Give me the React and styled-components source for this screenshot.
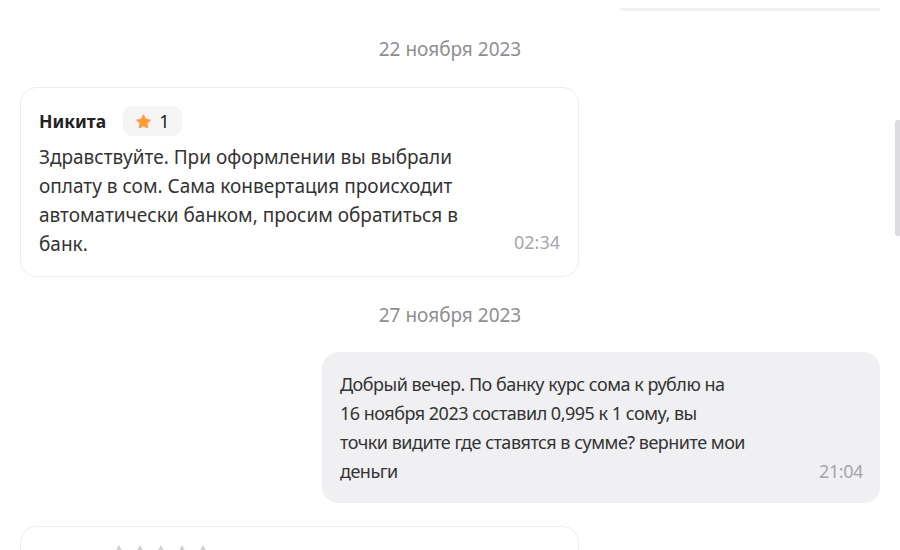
import React from "react";
import styled, { createGlobalStyle } from "styled-components";

const Global = createGlobalStyle`
  html, body { margin: 0; padding: 0; background: #fff; }
  body { font-family: "Noto Sans", "Open Sans", sans-serif; color: #333; }
`;

const Page = styled.div`
  position: relative;
  width: 900px;
  height: 550px;
  overflow: hidden;
  background: #fff;
`;

const Feed = styled.div`
  display: flex;
  flex-direction: column;
  padding: 0 20px;
`;

const PrevEdge = styled.div`
  align-self: flex-end;
  width: 260px;
  height: 3px;
  margin-top: 8px;
  background: #f0f0f1;
  border-radius: 0 0 2px 6px;
`;

const DateLabel = styled.div`
  align-self: center;
  font-size: 19px;
  line-height: 24px;
  color: #8e8e93;
  margin: ${(p) => p.$m};
`;

const Bubble = styled.div`
  box-sizing: border-box;
  width: ${(p) => p.$w}px;
  align-self: ${(p) => (p.$out ? "flex-end" : "flex-start")};
  background: ${(p) => (p.$out ? "#f0f0f2" : "#fff")};
  border: 1px solid ${(p) => (p.$out ? "#f0f0f2" : "#ededee")};
  border-radius: 16px;
  padding: ${(p) => p.$pad};
  margin-top: ${(p) => p.$mt || 0}px;
  height: ${(p) => (p.$h ? `${p.$h}px` : "auto")};
`;

const Header = styled.div`
  display: flex;
  align-items: center;
  gap: 17px;
  margin-bottom: 7px;
`;

const Name = styled.span`
  font-weight: 700;
  font-size: 17.5px;
  color: #222;
`;

const Badge = styled.span`
  display: inline-flex;
  align-items: center;
  gap: 7px;
  height: 30px;
  padding: 0 13px 0 12px;
  background: #f5f5f6;
  border-radius: 9px;
  font-size: 18px;
  color: #222;
`;

const Text = styled.div`
  font-size: ${(p) => p.$fs}px;
  line-height: 29px;
  color: #333;
  letter-spacing: ${(p) => p.$ls || "0"};
`;

const Time = styled.span`
  float: right;
  font-size: 18px;
  line-height: 29px;
  color: #a6a6aa;
  margin-left: 12px;
  letter-spacing: ${(p) => p.$ls || "0"};
  margin-top: ${(p) => p.$top}px;
`;

const Stars = styled.div`
  display: flex;
  gap: 3px;
  padding: 17px 0 0 89px;
`;

const Scrollbar = styled.div`
  position: absolute;
  right: 0;
  top: 120px;
  width: 5px;
  height: 116px;
  background: #dcdce0;
  border-radius: 3px 0 0 3px;
`;

const Star = ({ color, size = 17 }) => (
  <svg width={size} height={size} viewBox="0 0 24 24">
    <path
      d="M12 2.2c.4 0 .7.2.9.6l2.6 5.4 5.9.8c.8.1 1.1 1.1.5 1.6l-4.3 4.1 1 5.9c.1.8-.7 1.4-1.4 1l-5.2-2.8-5.3 2.8c-.7.4-1.5-.2-1.4-1l1-5.9-4.3-4.1c-.6-.5-.3-1.5.5-1.6l5.9-.8 2.6-5.4c.2-.4.6-.6 1-.6z"
      fill={color}
    />
  </svg>
);

export default function App() {
  return (
    <Page>
      <Global />
      <Feed>
        <PrevEdge />
        <DateLabel $m="26px 0 26px">22 ноября 2023</DateLabel>
        <Bubble $w={559} $pad="18px 18px 17px 18px">
          <Header>
            <Name>Никита</Name>
            <Badge>
              <Star color="#ff9b38" />1
            </Badge>
          </Header>
          <Text $fs={19}>
            Здравствуйте. При оформлении вы выбрали
            <br />
            оплату в сом. Сама конвертация происходит
            <br />
            автоматически банком, просим обратиться в
            <br />
            банк.
            <Time $top={-2}>02:34</Time>
          </Text>
        </Bubble>
        <DateLabel $m="26px 0 25px">27 ноября 2023</DateLabel>
        <Bubble $out $w={558} $pad="17px 16px 16px 17px">
          <Text $fs={18} $ls="-0.5px">
            Добрый вечер. По банку курс сома к рублю на
            <br />
            16 ноября 2023 составил 0,995 к 1 сому, вы
            <br />
            точки видите где ставятся в сумме? верните мои
            <br />
            деньги
            <Time $top={0} $ls="-0.4px">21:04</Time>
          </Text>
        </Bubble>
        <Bubble $w={559} $pad="0" $mt={23} $h={60}>
          <Stars>
            {[0, 1, 2, 3, 4].map((i) => (
              <Star key={i} color="#d2d2d6" size={18} />
            ))}
          </Stars>
        </Bubble>
      </Feed>
      <Scrollbar />
    </Page>
  );
}
